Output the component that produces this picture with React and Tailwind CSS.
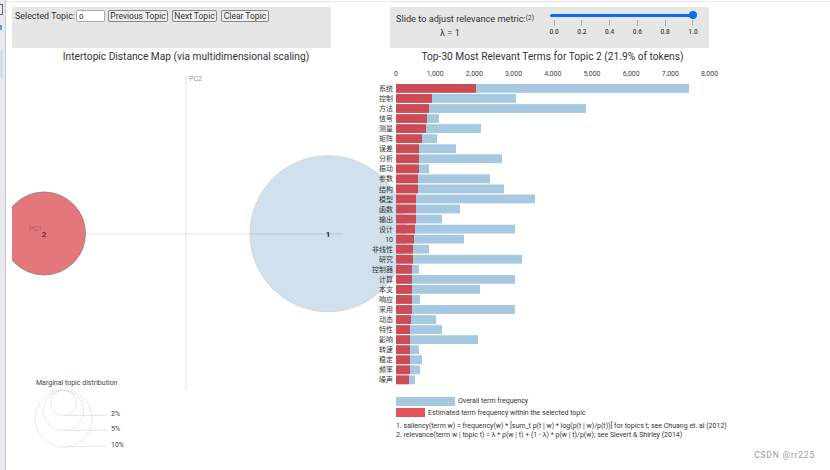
const terms = [
  ['系统', 476, 689], ['控制', 432, 516], ['方法', 429, 586], ['信号', 427, 439], ['测量', 426, 481],
  ['矩阵', 422, 437], ['误差', 419, 456], ['分析', 419, 502], ['振动', 419, 429], ['参数', 418, 490],
  ['结构', 418, 504], ['模型', 416, 535], ['函数', 416, 460], ['输出', 416, 442], ['设计', 415, 515],
  ['10', 414, 464], ['非线性', 413, 429], ['研究', 413, 522], ['控制器', 412, 419], ['计算', 412, 515],
  ['本文', 412, 480], ['响应', 412, 420], ['采用', 412, 515], ['动态', 411, 436], ['特性', 410, 442],
  ['影响', 410, 478], ['转速', 410, 419], ['稳定', 410, 422], ['频率', 410, 420], ['噪声', 409, 415],
];

const ticks = [0, 1000, 2000, 3000, 4000, 5000, 6000, 7000, 8000];
const sliderTicks = ['0.0', '0.2', '0.4', '0.6', '0.8', '1.0'];

function Chart() {
  return (
    <svg width="824" height="422" viewBox="6 48 824 422" className="block shrink-0">
      <text x="186" y="60" textAnchor="middle" fontSize="10.2" fill="#333">Intertopic Distance Map (via multidimensional scaling)</text>
      <text x="552.5" y="60" textAnchor="middle" fontSize="10.2" fill="#333">Top-30 Most Relevant Terms for Topic 2 (21.9% of tokens)</text>

      {/* topic map */}
      <line x1="186" y1="76" x2="186" y2="390" stroke="#e4e4e4" />
      <text x="189" y="81" fontSize="7" fill="#999">PC2</text>
      <circle cx="328" cy="233.7" r="78" fill="#d0e0ec" stroke="#c8d2d8" strokeWidth="0.8" />
      <line x1="12" y1="234" x2="343" y2="234" stroke="#000" strokeOpacity="0.1" />
      <clipPath id="mapClip"><rect x="12" y="76" width="400" height="320" /></clipPath>
      <circle cx="44" cy="233.5" r="41.5" fill="#e4777b" stroke="#8f7a7a" strokeWidth="0.8" clipPath="url(#mapClip)" />
      <text x="29" y="231" fontSize="7" fill="#b85c60">PC1</text>
      <text x="44" y="237" textAnchor="middle" fontSize="8" fontWeight="700" fill="#7a2a2e">2</text>
      <text x="328" y="237" textAnchor="middle" fontSize="8" fontWeight="700" fill="#222">1</text>

      {/* marginal topic distribution legend */}
      <text x="36" y="385" fontSize="7" fill="#444">Marginal topic distribution</text>
      <g fill="none" stroke="#bdbdbd" strokeWidth="0.7" strokeDasharray="1 1">
        <circle cx="63.5" cy="403" r="12.7" />
        <circle cx="63.5" cy="410.5" r="20" />
        <circle cx="63.5" cy="418.5" r="28.5" />
      </g>
      <g stroke="#ddd" strokeWidth="0.8">
        <line x1="64" y1="415.5" x2="106" y2="415.5" />
        <line x1="64" y1="430.5" x2="106" y2="430.5" />
        <line x1="64" y1="446.5" x2="106" y2="446.5" />
      </g>
      <text x="111" y="416" fontSize="7" fill="#444">2%</text>
      <text x="111" y="431" fontSize="7" fill="#444">5%</text>
      <text x="111" y="447" fontSize="7" fill="#444">10%</text>

      {/* bar chart */}
      {ticks.map((t, i) => (
        <text key={t} x={396 + i * 39.2} y="76" textAnchor="middle" fontSize="7" fill="#444">{t.toLocaleString('en-US')}</text>
      ))}
      {terms.map(([term, red, blue], i) => {
        const y = 84 + i * 10.05;
        return (
          <g key={term}>
            <rect x="396" y={y} width={blue - 396} height="8.8" fill="#a6c8e1" />
            <rect x="396" y={y} width={red - 396} height="8.8" fill="#cd4650" fillOpacity="0.97" />
            <text x="393" y={y + 7} textAnchor="end" fontSize="7" fill="#333">{term}</text>
          </g>
        );
      })}

      {/* bar legend */}
      <rect x="396" y="397" width="59" height="9" fill="#a6c8e1" />
      <text x="458" y="403" fontSize="7" fill="#333">Overall term frequency</text>
      <rect x="396" y="408" width="29" height="9" fill="#e0545a" />
      <text x="428" y="415" fontSize="7" fill="#333">Estimated term frequency within the selected topic</text>
      <text x="396" y="428" fontSize="7" fill="#333">1. saliency(term w) = frequency(w) * [sum_t p(t | w) * log(p(t | w)/p(t))] for topics t; see Chuang et. al (2012)</text>
      <text x="396" y="437" fontSize="7" fill="#333">2. relevance(term w | topic t) = λ * p(w | t) + (1 - λ) * p(w | t)/p(w); see Sievert &amp; Shirley (2014)</text>
    </svg>
  );
}

export default function App() {
  return (
    <div className="relative flex w-[830px] h-[470px] overflow-hidden bg-white font-['Roboto','Noto_Sans_CJK_SC',sans-serif] text-[#333]">
      <div className="w-[6px] shrink-0 bg-[#e9eaed] border-r border-[#c9cacc] flex flex-col items-start">
        <div className="w-[3px] h-[11px] mt-[4px] bg-[#e9eaed] border border-l-0 border-[#666]" />
        <div className="w-[2px] h-[5px] mt-[10px] bg-[#5b9bd5]" />
        <div className="w-[3px] h-[28px] mt-[20px] bg-[#d5dde6]" />
      </div>
      <div className="flex-1 min-w-0 flex flex-col border-t border-[#e8e8e8] mt-px">
        <div className="flex h-[41px] mt-[5px] shrink-0">
          <div className="ml-[6px] w-[319px] bg-[#e6e6e6] pl-[3px] pt-[3px] flex items-start gap-[3px] text-[8.9px]">
            <span className="leading-[12px] w-[58px] whitespace-nowrap">Selected Topic:</span>
            <input readOnly value="0" className="w-[29px] h-[12px] bg-white border border-[#aaa] rounded-[2px] px-[2px] text-[8px] leading-none" />
            <button className="w-[60px] h-[12px] bg-[#efefef] border border-[#888] rounded-[2px] text-[8.5px] leading-none whitespace-nowrap">Previous Topic</button>
            <button className="w-[45px] h-[12px] ml-[1px] bg-[#efefef] border border-[#888] rounded-[2px] text-[8.5px] leading-none whitespace-nowrap">Next Topic</button>
            <button className="w-[48px] h-[12px] ml-[1px] bg-[#efefef] border border-[#888] rounded-[2px] text-[8.5px] leading-none whitespace-nowrap">Clear Topic</button>
          </div>
          <div className="ml-[59px] w-[319px] bg-[#e6e6e6] flex">
            <div className="w-[160px] pl-[6px] pt-[5px] text-[9.2px]">
              <div className="h-[14px] leading-[14px] whitespace-nowrap">Slide to adjust relevance metric:<span className="text-[6.5px] leading-none relative top-[-2px]">(2)</span></div>
              <div className="leading-[14px] pl-[44px]">λ = 1</div>
            </div>
            <div className="w-[139px] ml-[4px]">
              <div className="relative h-[3px] mt-[7px] ml-[-4px] bg-[#0a6cf0] rounded-full">
                <div className="absolute right-[-4px] top-[-3px] w-[8px] h-[8px] rounded-full bg-[#0a6cf0]" />
              </div>
              <div className="flex justify-between mt-[3px]">
                {sliderTicks.map((t) => (
                  <div key={t} className="flex flex-col items-center w-0 text-[6.5px] font-medium text-[#444]">
                    <div className="w-px h-[6px] shrink-0 bg-[#aaa]" />
                    <span className="mt-[2px] leading-[8px]">{t}</span>
                  </div>
                ))}
              </div>
            </div>
          </div>
        </div>
        <Chart />
      </div>
      <div className="absolute right-[15px] bottom-[8px] text-[8.5px] tracking-[0.8px] text-[#9a9a9a]">CSDN @rr225</div>
    </div>
  );
}
